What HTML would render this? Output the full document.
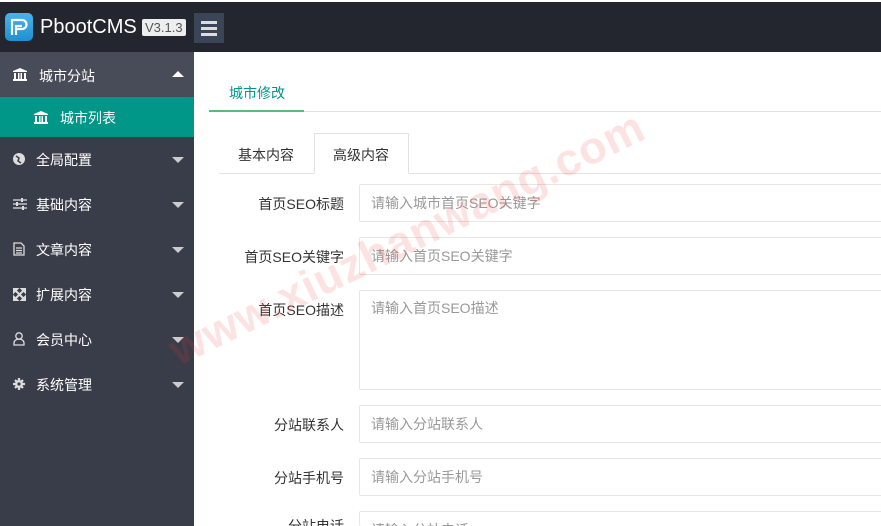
<!DOCTYPE html>
<html style="overflow:hidden;width:881px;height:526px"><head><meta charset="utf-8"><style>
*{margin:0;padding:0;box-sizing:border-box}
body{width:881px;height:526px;overflow:hidden;position:relative;background:#fff;font-family:"Liberation Sans","Noto Sans CJK SC",sans-serif;font-size:14px;color:#333}
.top{position:absolute;left:0;top:0;width:881px;height:52px;background:#23262e;border-top:2px solid #fff}
.logo{position:absolute;left:5px;top:11px;width:28px;height:28px;border-radius:5px;background:linear-gradient(#4ab4ea,#1e8fd0)}
.brand{position:absolute;left:40px;top:14px;color:#fff;font-size:20px}
.ver{position:absolute;left:142px;top:17px;background:#eee;color:#555;font-size:13px;padding:1px 3px;border-radius:2px}
.menu{position:absolute;left:194px;top:11px;width:30px;height:30px;background:#3a4658}
.menu i{position:absolute;left:7px;width:16px;height:3px;background:#ddd}
.side{position:absolute;left:0;top:52px;width:194px;height:474px;background:#393d49}
.item{position:absolute;left:0;width:194px;height:45px;color:#fff;font-size:14px}
.item span{position:absolute;left:36px;top:13px}
.item svg{position:absolute;left:13px;top:16px}
.arr{position:absolute;right:10px;top:20px;width:0;height:0;border-left:6px solid transparent;border-right:6px solid transparent;border-top:6px solid #ccc}
.up{border-top:none;border-bottom:6px solid #fff}
.wm{position:absolute;left:172px;top:330px;transform:rotate(-26deg);transform-origin:left center;color:rgba(240,60,60,.15);font:bold 45px "Liberation Sans",sans-serif;white-space:nowrap;letter-spacing:1px;line-height:1}
.lab{position:absolute;width:140px;left:204px;text-align:right;color:#333}
.inp{position:absolute;left:359px;width:530px;border:1px solid #e6e6e6;border-radius:2px;color:#999;padding-left:11px}
</style></head><body>
<div class="top"><div class="logo"><svg width="28" height="28"><path d="M7 22V7h10a4.5 4.5 0 0 1 0 9H11M11 22v-9h6" fill="none" stroke="#fff" stroke-width="2.2"/></svg></div>
<div class="brand">PbootCMS</div><div class="ver">V3.1.3</div>
<div class="menu"><i style="top:8px"></i><i style="top:14px"></i><i style="top:20px"></i></div></div>
<div class="side">
<div class="item" style="top:0;background:#484c58"><svg width="14" height="13"><path d="M7 0L0 3v1h14V3z M1 5h2v6H1z M5 5h1.5v6H5z M7.5 5H9v6H7.5z M11 5h2v6h-2z M0 11h14v2H0z" fill="#fff"/></svg><span style="left:39px;top:14px">城市分站</span><div class="arr up" style="top:19px"></div></div>
<div class="item" style="top:45px;height:40px;background:#009688"><svg width="14" height="13" style="left:34px;top:14px"><path d="M7 0L0 3v1h14V3z M1 5h2v6H1z M5 5h1.5v6H5z M7.5 5H9v6H7.5z M11 5h2v6h-2z M0 11h14v2H0z" fill="#fff"/></svg><span style="left:60px;top:11px">城市列表</span></div>
<div class="item" style="top:85px"><svg width="12" height="12"><circle cx="6" cy="6" r="6" fill="#ddd"/><path d="M3 3l3 2-1 3 3 2" stroke="#393d49" fill="none" stroke-width="1.5"/></svg><span>全局配置</span><div class="arr"></div></div>
<div class="item" style="top:130px"><svg width="14" height="12"><path d="M0 2h14M0 6h14M0 10h14" stroke="#ddd" stroke-width="1.3"/><rect x="8" y="0" width="2" height="4" fill="#ddd"/><rect x="3" y="4" width="2" height="4" fill="#ddd"/><rect x="9" y="8" width="2" height="4" fill="#ddd"/></svg><span>基础内容</span><div class="arr"></div></div>
<div class="item" style="top:175px"><svg width="12" height="14" style="top:15px"><path d="M1 1h7l3 3v9H1z M3 6h6M3 8.5h6M3 11h6" stroke="#ddd" fill="none" stroke-width="1.3"/></svg><span>文章内容</span><div class="arr"></div></div>
<div class="item" style="top:220px"><svg width="13" height="13"><path d="M0 0h5L0 5z M13 0v5L8 0z M0 13V8l5 5z M13 13H8l5-5z M3 3l7 7M10 3l-7 7" stroke="#ddd" fill="#ddd" stroke-width="2"/></svg><span>扩展内容</span><div class="arr"></div></div>
<div class="item" style="top:265px"><svg width="12" height="14" style="top:15px"><circle cx="6" cy="4" r="3.2" stroke="#ddd" fill="none" stroke-width="1.3"/><path d="M1 13v-2a5 4 0 0 1 10 0v2z" stroke="#ddd" fill="none" stroke-width="1.3"/></svg><span>会员中心</span><div class="arr"></div></div>
<div class="item" style="top:310px"><svg width="12" height="12"><circle cx="6" cy="6" r="4" fill="#ddd"/><path d="M6 0v12M0 6h12M2 2l8 8M10 2l-8 8" stroke="#ddd" stroke-width="2.2"/><circle cx="6" cy="6" r="1.6" fill="#393d49"/></svg><span>系统管理</span><div class="arr"></div></div>
</div>
<div style="position:absolute;left:229px;top:83px;color:#009688">城市修改</div>
<div style="position:absolute;left:209px;top:111px;width:672px;height:1px;background:#e2e2e2"></div>
<div style="position:absolute;left:209px;top:110px;width:95px;height:2px;background:#5fb878"></div>
<div style="position:absolute;left:238px;top:145px;color:#333">基本内容</div>
<div style="position:absolute;left:314px;top:133px;width:95px;height:41px;border:1px solid #e2e2e2;border-bottom:1px solid #fff;background:#fff"></div>
<div style="position:absolute;left:333px;top:145px;color:#333">高级内容</div>
<div style="position:absolute;left:219px;top:173px;width:95px;height:1px;background:#e2e2e2"></div>
<div style="position:absolute;left:409px;top:173px;width:472px;height:1px;background:#e2e2e2"></div>
<div class="lab" style="top:194px">首页SEO标题</div><div class="inp" style="top:184px;height:38px;line-height:36px">请输入城市首页SEO关键字</div>
<div class="lab" style="top:247px">首页SEO关键字</div><div class="inp" style="top:237px;height:38px;line-height:36px">请输入首页SEO关键字</div>
<div class="lab" style="top:300px">首页SEO描述</div><div class="inp" style="top:290px;height:100px;padding-top:7px">请输入首页SEO描述</div>
<div class="lab" style="top:415px">分站联系人</div><div class="inp" style="top:405px;height:38px;line-height:36px">请输入分站联系人</div>
<div class="lab" style="top:468px">分站手机号</div><div class="inp" style="top:458px;height:38px;line-height:36px">请输入分站手机号</div>
<div class="lab" style="top:516px;height:10px;overflow:hidden">分站电话</div><div class="inp" style="top:511px;height:15px;line-height:36px;border-bottom:none;overflow:hidden">请输入分站电话</div>
<div class="wm">www.xiuzhanwang.com</div>
</body></html>
